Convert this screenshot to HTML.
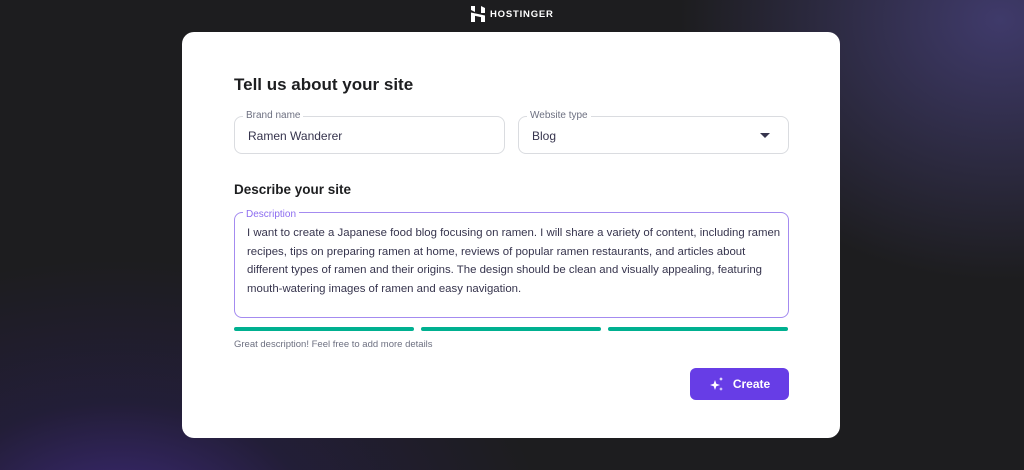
<!DOCTYPE html><html><head><style>
body{margin:0;width:1024px;height:470px;overflow:hidden;font-family:"Liberation Sans",sans-serif;
background:radial-gradient(ellipse 420px 260px at 120px 520px,#3d2a78 0%,rgba(40,30,80,0.5) 45%,rgba(29,29,31,0) 100%),radial-gradient(ellipse 320px 260px at 1000px 20px,#3f3a6a 0%,rgba(29,29,31,0) 100%),#1d1d1f;position:relative}
.logo{position:absolute;left:471px;top:6px;color:#fff;font-weight:bold;font-size:9.5px;letter-spacing:0.8px;display:flex;align-items:center;gap:5px}
.card{position:absolute;left:182px;top:32px;width:658px;height:406px;background:#fff;border-radius:12px}
.a{position:absolute}
h1{position:absolute;left:52px;top:43px;margin:0;font-size:17px;color:#1d1e20}
h2{position:absolute;left:52px;top:150px;margin:0;font-size:13.5px;color:#1d1e20}
.in{position:absolute;border:1px solid #dadce0;border-radius:8px;height:38px;font-size:12px;color:#36344d;box-sizing:border-box;padding:12px 13px}
.lab{position:absolute;top:-7px;left:8px;background:#fff;padding:0 3px;font-size:10px;color:#6d7081}
.bar{position:absolute;top:295px;height:4px;width:180px;background:#00b090;border-radius:2px}
</style></head><body>
<div class="logo"><svg width="14" height="16" viewBox="0 0 14 16"><path d="M0 0h4v6l-4-2zM10 0l4 2v5h-4zM0 9h4v7H0zM10 10l4 2v4h-4zM0 6.5l14 3V12L0 9z" fill="#fff"/></svg>HOSTINGER</div>
<div class="card">
<h1>Tell us about your site</h1>
<div class="in" style="left:52px;top:84px;width:271px">Ramen Wanderer<span class="lab">Brand name</span></div>
<div class="in" style="left:336px;top:84px;width:271px">Blog<span class="lab">Website type</span><span style="position:absolute;right:18px;top:16px;border:5px solid transparent;border-top:5px solid #36344d;border-bottom:0"></span></div>
<h2>Describe your site</h2>
<div class="in" style="left:52px;top:180px;width:555px;height:106px;border-color:#a48bf0;line-height:18.5px;font-size:11.4px;padding:11px 4px 11px 12px;white-space:nowrap">I want to create a Japanese food blog focusing on ramen. I will share a variety of content, including ramen<br>recipes, tips on preparing ramen at home, reviews of popular ramen restaurants, and articles about<br>different types of ramen and their origins. The design should be clean and visually appealing, featuring<br>mouth-watering images of ramen and easy navigation.<span class="lab" style="color:#8c6cf0">Description</span></div>
<div class="bar" style="left:52px"></div><div class="bar" style="left:239px"></div><div class="bar" style="left:426px"></div>
<div class="a" style="left:52px;top:307px;font-size:9.5px;color:#6d7081">Great description! Feel free to add more details</div>
<div class="a" style="left:508px;top:336px;width:99px;height:32px;background:#673de6;border-radius:6px;color:#fff;font-weight:bold;font-size:12px;display:flex;align-items:center;justify-content:center;gap:8px"><svg width="16" height="16" viewBox="0 0 16 16" fill="#fff"><path d="M6 4l1.3 3.7L11 9 7.3 10.3 6 14 4.7 10.3 1 9l3.7-1.3z"/><path d="M12 1l.6 1.4L14 3l-1.4.6L12 5l-.6-1.4L10 3l1.4-.6zM12 11l.5 1.5L14 13l-1.5.5L12 15l-.5-1.5L10 13l1.5-.5z"/></svg>Create</div>
</div>
</body></html>
